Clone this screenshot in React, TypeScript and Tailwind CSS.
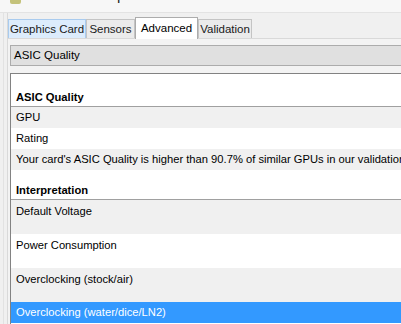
import React from 'react';

const tabs = [
  { label: 'Graphics Card', w: 'w-[78px]', cls: 'bg-[#dcecfc] border-[#a9cbee]' },
  { label: 'Sensors', w: 'w-[49px]', cls: 'bg-[#ebebeb] border-[#c4c4c4]' },
  { label: 'Advanced', w: 'w-[63px]', active: true },
  { label: 'Validation', w: 'w-[54px]', cls: 'bg-[#ebebeb] border-[#c4c4c4]' },
];

type Row = { text: string; tall?: boolean; shade?: boolean; selected?: boolean };

const asicRows: Row[] = [
  { text: 'GPU', shade: true },
  { text: 'Rating' },
  { text: "Your card's ASIC Quality is higher than 90.7% of similar GPUs in our validation database.", shade: true },
];

const interpRows: Row[] = [
  { text: 'Default Voltage', tall: true, shade: true },
  { text: 'Power Consumption', tall: true },
  { text: 'Overclocking (stock/air)', tall: true, shade: true },
  { text: 'Overclocking (water/dice/LN2)', selected: true },
];

function ListRow({ row }: { row: Row }) {
  const bg = row.selected ? 'bg-[#3399ff] text-white' : row.shade ? 'bg-[#f0f0f0] text-black' : 'bg-white text-black';
  return (
    <div className={`${bg} ${row.tall ? 'h-[34px] pt-[1px]' : 'h-[21px]'} pl-[5px] whitespace-nowrap overflow-hidden`}>
      <div className="h-[21px] leading-[21px]">{row.text}</div>
    </div>
  );
}

function Header({ text, h }: { text: string; h: string }) {
  return (
    <div className={`${h} flex items-end pl-[5px] pb-[1px] border-b border-[#a0a0a0] font-bold bg-white`}>
      <span className="leading-[15px]">{text}</span>
    </div>
  );
}

export default function App() {
  return (
    <div
      className="w-[401px] h-[324px] overflow-hidden bg-[#f0f0f0] text-black"
      style={{ fontFamily: '"Liberation Sans", Arial, sans-serif' }}
    >
      {/* title bar, mostly scrolled out of view */}
      <div className="h-[13px] overflow-hidden bg-[#f7f7f7] border-b border-[#e3e3e3] flex items-start">
        <div className="ml-[10px] mt-[-6px] w-[11px] h-[10px] bg-[#c4c27a] rounded-[2px]" />
        <span className="ml-[11px] mt-[-13px] text-[15px] leading-[16px] text-[#222] whitespace-nowrap">
          TechPowerUp GPU-Z 2.3.0
        </span>
      </div>

      <div className="flex">
        <div className="w-[8px] shrink-0 border-r border-[#d9d9d9]">
          <div className="ml-[3px] w-[1px] h-[311px] bg-[#e2e2e2]" />
        </div>
        <div className="flex-1 min-w-0">
          {/* tabs */}
          <div className="h-[25px] flex items-end text-[11.5px] whitespace-nowrap">
            {tabs.map((t) =>
              t.active ? (
                <div
                  key={t.label}
                  className={`${t.w} h-[22px] bg-white border border-b-0 border-[#acacac] mb-[-1px] relative z-10 flex items-start justify-center pt-[2px]`}
                >
                  {t.label}
                </div>
              ) : (
                <div
                  key={t.label}
                  className={`${t.w} h-[19px] border border-b-0 ${t.cls} flex items-center justify-center text-[#1a1a1a] pt-[1px]`}
                >
                  {t.label}
                </div>
              )
            )}
          </div>

          {/* tab page */}
          <div className="border-t border-[#d9d9d9] bg-[#f3f3f3] pl-[2px] pt-[6px]">
            <div className="h-[21px] bg-[#e0e0e0] border border-[#acacac] border-r-0 pl-[3px] flex items-center text-[11.5px]">
              ASIC Quality
            </div>

            <div className="mt-[7px] border-t border-l border-[#828282] bg-white text-[11.2px] h-[260px]">
              <Header text="ASIC Quality" h="h-[33px]" />
              {asicRows.map((r) => (
                <ListRow key={r.text} row={r} />
              ))}
              <Header text="Interpretation" h="h-[30px]" />
              {interpRows.map((r) => (
                <ListRow key={r.text} row={r} />
              ))}
            </div>
          </div>
        </div>
      </div>
    </div>
  );
}
